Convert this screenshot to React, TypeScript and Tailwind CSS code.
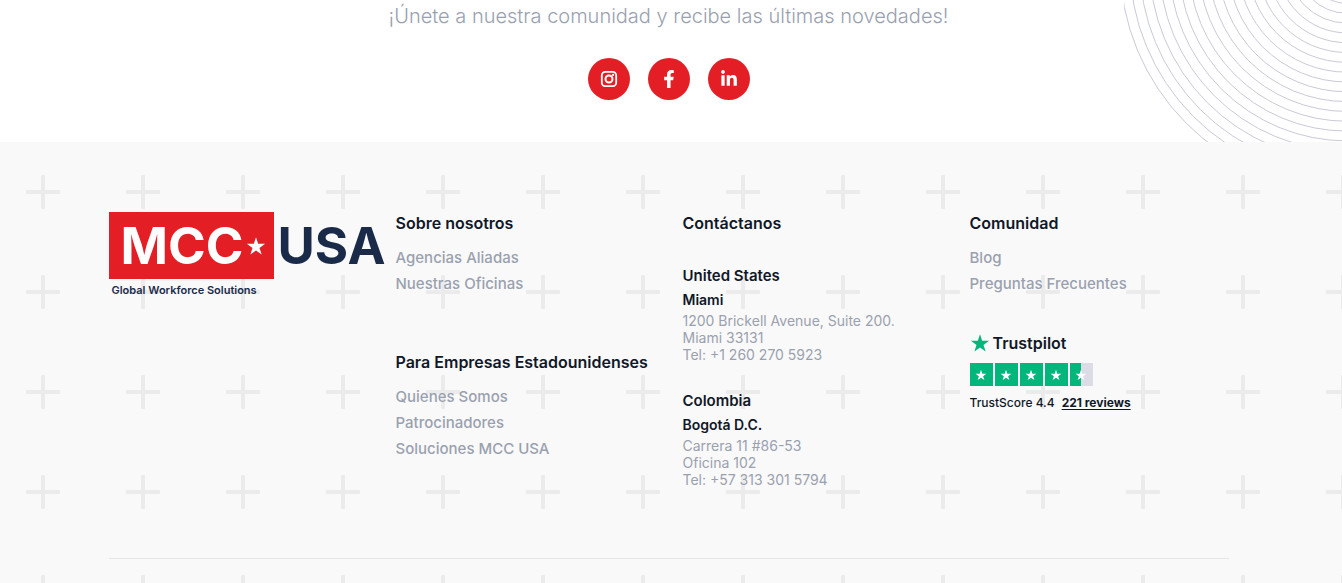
import { FaFacebookF, FaLinkedinIn } from "react-icons/fa";

const RINGS = Array.from({ length: 20 }, (_, i) => 227 - i * 9.82);

const STAR =
  "M12 1.5l2.6 7.9h8.3l-6.7 4.9 2.6 7.9-6.8-4.9-6.7 4.9 2.5-7.9-6.7-4.9h8.3z";

interface Office {
  country: string;
  city: string;
  lines: string[];
}

const OFFICES: Office[] = [
  {
    country: "United States",
    city: "Miami",
    lines: ["1200 Brickell Avenue, Suite 200.", "Miami 33131", "Tel: +1 260 270 5923"],
  },
  {
    country: "Colombia",
    city: "Bogotá D.C.",
    lines: ["Carrera 11 #86-53", "Oficina 102", "Tel: +57 313 301 5794"],
  },
];

function InstagramIcon() {
  return (
    <svg viewBox="0 0 18 18" className="size-[18px]" fill="none" stroke="currentColor">
      <rect x="1.8" y="1.8" width="14.4" height="14.4" rx="3.4" strokeWidth="1.8" />
      <circle cx="9" cy="9" r="3.5" strokeWidth="2" />
      <circle cx="13.1" cy="4.9" r="1.1" fill="currentColor" stroke="none" />
    </svg>
  );
}

const SOCIALS = [
  { label: "Instagram", icon: <InstagramIcon /> },
  { label: "Facebook", icon: <FaFacebookF className="size-[18px]" /> },
  { label: "LinkedIn", icon: <FaLinkedinIn className="size-[18px]" /> },
];

function Star({ className }: { className: string }) {
  return (
    <svg viewBox="0 0 24 24" className={className} fill="currentColor" aria-hidden="true">
      <path d={STAR} />
    </svg>
  );
}

function Rings() {
  return (
    <svg
      className="absolute top-0 right-0"
      width="218"
      height="142"
      fill="none"
      stroke="#c9cad6"
      aria-hidden="true"
    >
      {RINGS.map((r) => (
        <circle key={r} cx="223" cy="-37" r={r} />
      ))}
    </svg>
  );
}

function PlusPattern() {
  return (
    <svg className="absolute inset-0 size-full" aria-hidden="true">
      <defs>
        <pattern id="plus" width="100" height="100" patternUnits="userSpaceOnUse">
          <g fill="#ebebeb">
            <rect x="26" y="48" width="34" height="4" rx="1" />
            <rect x="41" y="33" width="4" height="34" rx="1" />
          </g>
        </pattern>
      </defs>
      <rect width="100%" height="100%" fill="url(#plus)" />
    </svg>
  );
}

function Logo() {
  return (
    <a href="#" className="block w-max text-[#1a2b49]">
      <span className="flex items-center gap-1 text-[51px] leading-none font-bold">
        <span className="flex h-[67px] w-[165px] items-center justify-end gap-0.5 bg-[#e41e25] pr-2 text-white">
          MCC
          <Star className="size-5" />
        </span>
        USA
      </span>
      <span className="block pt-[3px] pl-[3px] text-[11px] leading-4 font-semibold">
        Global Workforce Solutions
      </span>
    </a>
  );
}

function LinkGroup({ title, links }: { title: string; links: string[] }) {
  return (
    <div>
      <h2 className="text-base leading-[22px] font-semibold">{title}</h2>
      <ul className="mt-[11px]">
        {links.map((link) => (
          <li key={link} className="text-[15px] leading-[26px] font-medium text-gray-400">
            <a href="#">{link}</a>
          </li>
        ))}
      </ul>
    </div>
  );
}

function Trustpilot() {
  return (
    <div className="mt-[34px]">
      <div className="flex items-center gap-[3px] text-base leading-6 font-semibold">
        <Star className="size-5 text-[#00b67a]" />
        Trustpilot
      </div>
      <div className="mt-2 flex gap-0.5">
        {[100, 100, 100, 100, 50].map((fill, i) => (
          <span key={i} className="relative flex size-[23px] items-center justify-center bg-[#dcdce6]">
            <span className="absolute inset-y-0 left-0 bg-[#00b67a]" style={{ width: `${fill}%` }} />
            <Star className="relative size-3 text-white" />
          </span>
        ))}
      </div>
      <p className="mt-[9px] flex gap-[7px] text-xs leading-4 font-medium">
        TrustScore 4.4
        <a href="#" className="font-bold underline underline-offset-2">
          221 reviews
        </a>
      </p>
    </div>
  );
}

export default function App() {
  return (
    <div className="min-h-screen overflow-hidden bg-[#f9f9f9] font-['Inter',sans-serif] text-gray-900">
      <section className="relative bg-white pt-0.5 pr-[5px] pb-[42px]">
        <Rings />
        <p className="text-center text-xl leading-7 font-light text-gray-400">
          ¡Únete a nuestra comunidad y recibe las últimas novedades!
        </p>
        <div className="mt-7 flex justify-center gap-[18px]">
          {SOCIALS.map(({ label, icon }) => (
            <a
              key={label}
              href="#"
              aria-label={label}
              className="flex size-[42px] items-center justify-center rounded-full bg-[#e41e25] text-white"
            >
              {icon}
            </a>
          ))}
        </div>
      </section>

      <footer className="relative pt-[70px] pr-[5px] pb-6">
        <PlusPattern />
        <div className="relative mx-auto max-w-[1120px]">
          <div className="grid grid-cols-4 gap-7">
            <Logo />

            <div className="flex flex-col gap-[54px]">
              <LinkGroup title="Sobre nosotros" links={["Agencias Aliadas", "Nuestras Oficinas"]} />
              <LinkGroup
                title="Para Empresas Estadounidenses"
                links={["Quienes Somos", "Patrocinadores", "Soluciones MCC USA"]}
              />
            </div>

            <div>
              <h2 className="mb-[30px] text-base leading-[22px] font-semibold">Contáctanos</h2>
              <div className="flex flex-col gap-[26px]">
                {OFFICES.map(({ country, city, lines }) => (
                  <address key={country} className="text-sm leading-[17px] text-gray-400 not-italic">
                    <h3 className="text-[15px] leading-6 font-semibold text-gray-900">{country}</h3>
                    <h4 className="leading-6 font-semibold text-gray-900">{city}</h4>
                    {lines.map((line) => (
                      <p key={line}>{line}</p>
                    ))}
                  </address>
                ))}
              </div>
            </div>

            <div>
              <LinkGroup title="Comunidad" links={["Blog", "Preguntas Frecuentes"]} />
              <Trustpilot />
            </div>
          </div>
          <hr className="mt-[70px] border-[#e5e5e5]" />
        </div>
      </footer>
    </div>
  );
}
